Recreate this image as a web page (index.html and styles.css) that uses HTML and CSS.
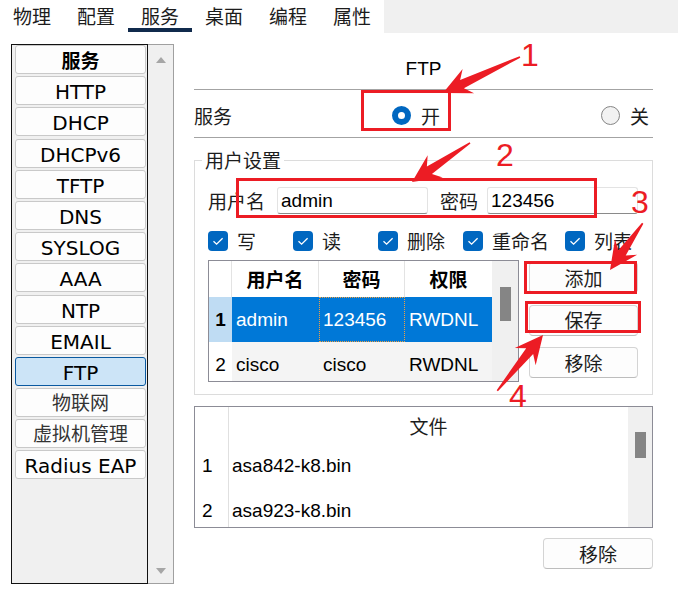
FILE: index.html
```html
<!DOCTYPE html>
<html lang="zh-CN">
<head>
<meta charset="utf-8">
<title>FTP 服务</title>
<link rel="stylesheet" href="styles.css">
</head>
<body>
<nav class="tabs">
  <span class="tab">物理</span>
  <span class="tab">配置</span>
  <span class="tab active">服务</span>
  <span class="tab">桌面</span>
  <span class="tab">编程</span>
  <span class="tab">属性</span>
  <span class="tab-fill"></span>
</nav>
<div class="main">
  <aside class="side">
    <ul class="svc-list">
      <li class="svc head">服务</li>
      <li class="svc">HTTP</li>
      <li class="svc">DHCP</li>
      <li class="svc">DHCPv6</li>
      <li class="svc">TFTP</li>
      <li class="svc">DNS</li>
      <li class="svc">SYSLOG</li>
      <li class="svc">AAA</li>
      <li class="svc">NTP</li>
      <li class="svc">EMAIL</li>
      <li class="svc sel">FTP</li>
      <li class="svc zh">物联网</li>
      <li class="svc zh">虚拟机管理</li>
      <li class="svc">Radius EAP</li>
    </ul>
    <div class="vscroll"><span class="arr up"></span><span class="arr down"></span></div>
  </aside>
  <section class="panel">
    <div class="title">FTP</div>
    <div class="svc-row">
      <span class="lbl zhf">服务</span>
      <span class="ropt first"><span class="radio on"></span><span class="zhf">开</span></span>
      <span class="ropt"><span class="radio"></span><span class="zhf">关</span></span>
    </div>
    <fieldset class="users">
      <legend class="zhf">用户设置</legend>
      <div class="cred">
        <span class="f-lbl zhf">用户名</span>
        <input class="inp" type="text" value="admin" readonly>
        <span class="f-lbl2 zhf">密码</span>
        <input class="inp inp2" type="text" value="123456" readonly>
      </div>
      <div class="perms">
        <span class="perm"><span class="cb"><svg viewBox="0 0 20 20" width="20" height="20"><path d="M5.5 10.2 L8.6 13.2 L14.6 7.2" fill="none" stroke="#fff" stroke-width="1.3"/></svg></span><span class="zhf">写</span></span>
        <span class="perm"><span class="cb"><svg viewBox="0 0 20 20" width="20" height="20"><path d="M5.5 10.2 L8.6 13.2 L14.6 7.2" fill="none" stroke="#fff" stroke-width="1.3"/></svg></span><span class="zhf">读</span></span>
        <span class="perm"><span class="cb"><svg viewBox="0 0 20 20" width="20" height="20"><path d="M5.5 10.2 L8.6 13.2 L14.6 7.2" fill="none" stroke="#fff" stroke-width="1.3"/></svg></span><span class="zhf">删除</span></span>
        <span class="perm"><span class="cb"><svg viewBox="0 0 20 20" width="20" height="20"><path d="M5.5 10.2 L8.6 13.2 L14.6 7.2" fill="none" stroke="#fff" stroke-width="1.3"/></svg></span><span class="zhf">重命名</span></span>
        <span class="perm"><span class="cb"><svg viewBox="0 0 20 20" width="20" height="20"><path d="M5.5 10.2 L8.6 13.2 L14.6 7.2" fill="none" stroke="#fff" stroke-width="1.3"/></svg></span><span class="zhf">列表</span></span>
      </div>
      <div class="tbl-area">
        <div class="tbl">
          <div class="tbl-grid">
            <div class="th"></div>
            <div class="th">用户名</div>
            <div class="th">密码</div>
            <div class="th last">权限</div>
            <div class="num sel-num">1</div>
            <div class="td sel-td">admin</div>
            <div class="td sel-td focus">123456</div>
            <div class="td sel-td">RWDNL</div>
            <div class="num">2</div>
            <div class="td">cisco</div>
            <div class="td">cisco</div>
            <div class="td">RWDNL</div>
          </div>
          <div class="tbl-scroll"><div class="thumb"></div></div>
        </div>
        <div class="btns">
          <button class="btn">添加</button>
          <button class="btn">保存</button>
          <button class="btn">移除</button>
        </div>
      </div>
    </fieldset>
    <div class="files">
      <div class="files-grid">
        <div class="fnum"></div>
        <div class="fname fhead zhf">文件</div>
        <div class="fnum">1</div>
        <div class="fname">asa842-k8.bin</div>
        <div class="fnum">2</div>
        <div class="fname">asa923-k8.bin</div>
      </div>
      <div class="files-scroll"><div class="fthumb"></div></div>
    </div>
    <div class="files-actions"><button class="btn wide">移除</button></div>
  </section>
</div>

<div class="marks">
  <svg class="ink" viewBox="0 0 678 595" width="678" height="595">
    <g fill="#ec1c24">
      <polygon transform="translate(443 93) rotate(154.9)" points="0,0 -28,-13.5 -21,-4.5 -85,-0.8 -85,0.8 -21,4.5 -28,13.5"/>
      <polygon transform="translate(412 182) rotate(146)" points="0,0 -28,-13.5 -21,-4.5 -70,-0.8 -70,0.8 -21,4.5 -28,13.5"/>
      <polygon transform="translate(610 270) rotate(125)" points="0,0 -28,-13.5 -21,-4.5 -57,-0.8 -57,0.8 -21,4.5 -28,13.5"/>
      <polygon transform="translate(543 335) rotate(-50.6)" points="0,0 -28,-13.5 -21,-4.5 -72,-0.8 -72,0.8 -21,4.5 -28,13.5"/>
    </g>
  </svg>
  <span class="rbox b1"></span>
  <span class="rbox b2"></span>
  <span class="rbox b3"></span>
  <span class="rbox b4"></span>
  <span class="mk n1">1</span>
  <span class="mk n2">2</span>
  <span class="mk n3">3</span>
  <span class="mk n4">4</span>
</div>
</body>
</html>
```
FILE: styles.css
```css
* { box-sizing: border-box; }
html, body { margin: 0; padding: 0; }
body {
  width: 678px;
  height: 595px;
  overflow: hidden;
  position: relative;
  background: #fff;
  color: #000;
  font-family: "Liberation Sans", "Noto Sans CJK SC", sans-serif;
  font-size: 19px;
}
.zhf { font-family: "Noto Sans CJK SC", sans-serif; color: #1c1c1c; }

/* tabs */
.tabs { display: flex; height: 33px; }
.tab {
  width: 64px;
  height: 32px;
  padding-top: 4px;
  line-height: 24px;
  text-align: center;
  border-bottom: 4px solid transparent;
  font-family: "Noto Sans CJK SC", sans-serif;
  color: #1c1c1c;
}
.tab.active { border-bottom-color: #102a4c; }
.tab-fill { flex: 1; background: #f0f0f0; }

/* layout */
.main { display: flex; align-items: flex-start; }
.side { display: flex; margin: 11px 0 0 11px; }
.svc-list {
  list-style: none;
  margin: 0;
  width: 137px;
  height: 540px;
  border: 1px solid #111;
  background: #f0f0f0;
  padding: 0 1px 0 3px;
  display: flex;
  flex-direction: column;
  gap: 2.2px;
}
.svc {
  flex: none;
  height: 29px;
  border: 1px solid #c9c9c9;
  border-radius: 3px;
  background: #fdfdfd;
  text-align: center;
  font-family: "DejaVu Sans", "Noto Sans CJK SC", sans-serif;
  font-size: 20px;
  padding-top: 3px;
  line-height: 24px;
  white-space: nowrap;
}
.svc.head { font-family: "Noto Sans CJK SC", sans-serif; font-weight: bold; font-size: 19px; padding-top: 2px; }
.svc.zh { font-family: "Noto Sans CJK SC", sans-serif; font-size: 19px; color: #333; padding-top: 1px; }
.svc.sel { background: #cce4f7; border-color: #0a59a0; }
.vscroll {
  width: 26px;
  height: 540px;
  background: #f0f0f0;
  border: 1px solid #a0a0a0;
  border-left: 0;
  display: flex;
  flex-direction: column;
  justify-content: space-between;
  align-items: center;
  padding: 12px 0 9px;
}
.arr { width: 0; height: 0; border-left: 5.5px solid transparent; border-right: 5.5px solid transparent; }
.arr.up { border-bottom: 6px solid #a6a6a6; }
.arr.down { border-top: 6px solid #a6a6a6; }

/* right panel */
.panel { width: 459px; margin-left: 20px; }
.title { margin-top: 22px; height: 34px; line-height: 28px; text-align: center; }
.svc-row {
  display: flex;
  align-items: center;
  height: 49px;
  border-top: 1px solid #a3a3a3;
  border-bottom: 1px solid #a3a3a3;
  padding-top: 3px;
}
.lbl { width: 198px; }
.ropt { display: flex; align-items: center; gap: 10px; }
.ropt.first { width: 209px; }
.radio {
  width: 19px;
  height: 19px;
  border-radius: 50%;
  border: 1px solid #858585;
  background: #f2f2f2;
}
.radio.on { border: 6px solid #0067c0; background: #fff; }

.users {
  margin: 10px 0 0;
  padding: 0 14px 12px 13px;
  border: 1px solid #dcdcdc;
  min-width: 0;
}
.users legend { margin-left: -6px; padding: 0 3px; line-height: 24px; }
.cred { display: flex; align-items: center; margin-top: 15px; height: 27px; }
.f-lbl { margin-right: 12px; }
.f-lbl2 { margin-left: 12px; margin-right: 9px; }
.inp {
  width: 151px;
  height: 27px;
  margin: 0;
  padding: 0 3px;
  border: 1px solid #e3e3e3;
  border-bottom: 1px solid #8a8a8a;
  border-radius: 3px;
  background: #fff;
  font-family: "Liberation Sans", sans-serif;
  font-size: 19px;
  color: #000;
  outline: none;
}
.perms {
  display: grid;
  grid-template-columns: 85px 85px 85px 102px auto;
  margin-top: 13px;
  height: 20px;
}
.perm { display: flex; align-items: center; gap: 9px; white-space: nowrap; }
.cb { width: 20px; height: 20px; border-radius: 4px; background: #0067c0; display: flex; flex: none; }

.tbl-area { display: flex; gap: 10px; margin-top: 13px; align-items: flex-start; }
.tbl {
  width: 311px;
  height: 122px;
  border: 1px solid #8c8c96;
  display: flex;
  overflow: hidden;
  flex: none;
}
.tbl-grid {
  flex: none;
  width: 283px;
  display: grid;
  grid-template-columns: 23px 87px 86px 87px;
  grid-template-rows: 36px 45px 45px;
}
.th {
  background: #fff;
  border-right: 1px solid #e3e3e3;
  font-family: "Noto Sans CJK SC", sans-serif;
  font-weight: bold;
  text-align: center;
  line-height: 36px;
}
.th.last { border-right: 0; }
.num { display: flex; align-items: center; justify-content: center; background: #fff; }
.sel-num { background: #bfdcf3; font-weight: bold; }
.td { display: flex; align-items: center; padding-left: 4px; background: #f4f4f4; white-space: nowrap; }
.sel-td { background: #0078d7; color: #fff; }
.focus { border: 1px dotted #f0a040; padding-left: 3px; }
.tbl-scroll { flex: none; width: 26px; background: #f0f0f0; }
.thumb { width: 11px; height: 34px; margin: 26px 0 0 8px; background: #858585; }

.btns { display: flex; flex-direction: column; gap: 11.5px; margin-top: 2px; }
.btn {
  width: 109px;
  height: 31px;
  margin: 0;
  padding: 0;
  background: #fdfdfd;
  border: 1px solid #d4d4d4;
  border-bottom-color: #bdbdbd;
  border-radius: 4px;
  font-family: "Noto Sans CJK SC", sans-serif;
  font-size: 19px;
  color: #1c1c1c;
  line-height: 28px;
}
.btn.wide { width: 110px; }

.files {
  margin-top: 11px;
  height: 122px;
  border: 1px solid #8c8c96;
  display: flex;
  overflow: hidden;
}
.files-grid {
  flex: none;
  display: grid;
  grid-template-columns: 34px 399px;
  grid-template-rows: 36px 45px 45px;
}
.fnum { border-right: 1px solid #e0e0e0; padding-left: 7px; display: flex; align-items: center; }
.fname { padding-left: 3px; display: flex; align-items: center; }
.fhead { justify-content: center; padding-left: 0; }
.files-scroll { flex: none; width: 24px; background: #f0f0f0; }
.fthumb { width: 11px; height: 26px; margin: 25px 0 0 7px; background: #858585; }
.files-actions { display: flex; justify-content: flex-end; margin-top: 10px; }

/* annotations overlay */
.marks { position: absolute; left: 0; top: 0; width: 678px; height: 595px; pointer-events: none; }
.ink { position: absolute; left: 0; top: 0; }
.rbox { position: absolute; border: 3px solid #ec1c24; }
.b1 { left: 361px; top: 90px; width: 90px; height: 41px; }
.b2 { left: 236px; top: 178px; width: 361px; height: 40px; }
.b3 { left: 524px; top: 261px; width: 113px; height: 33px; }
.b4 { left: 525px; top: 301px; width: 116px; height: 32px; }
.mk { position: absolute; color: #ec1c24; font-family: "Liberation Sans", sans-serif; font-size: 32px; line-height: 32px; }
.n1 { left: 521px; top: 39px; }
.n2 { left: 496px; top: 139px; }
.n3 { left: 631px; top: 186px; }
.n4 { left: 509px; top: 380px; }
```
